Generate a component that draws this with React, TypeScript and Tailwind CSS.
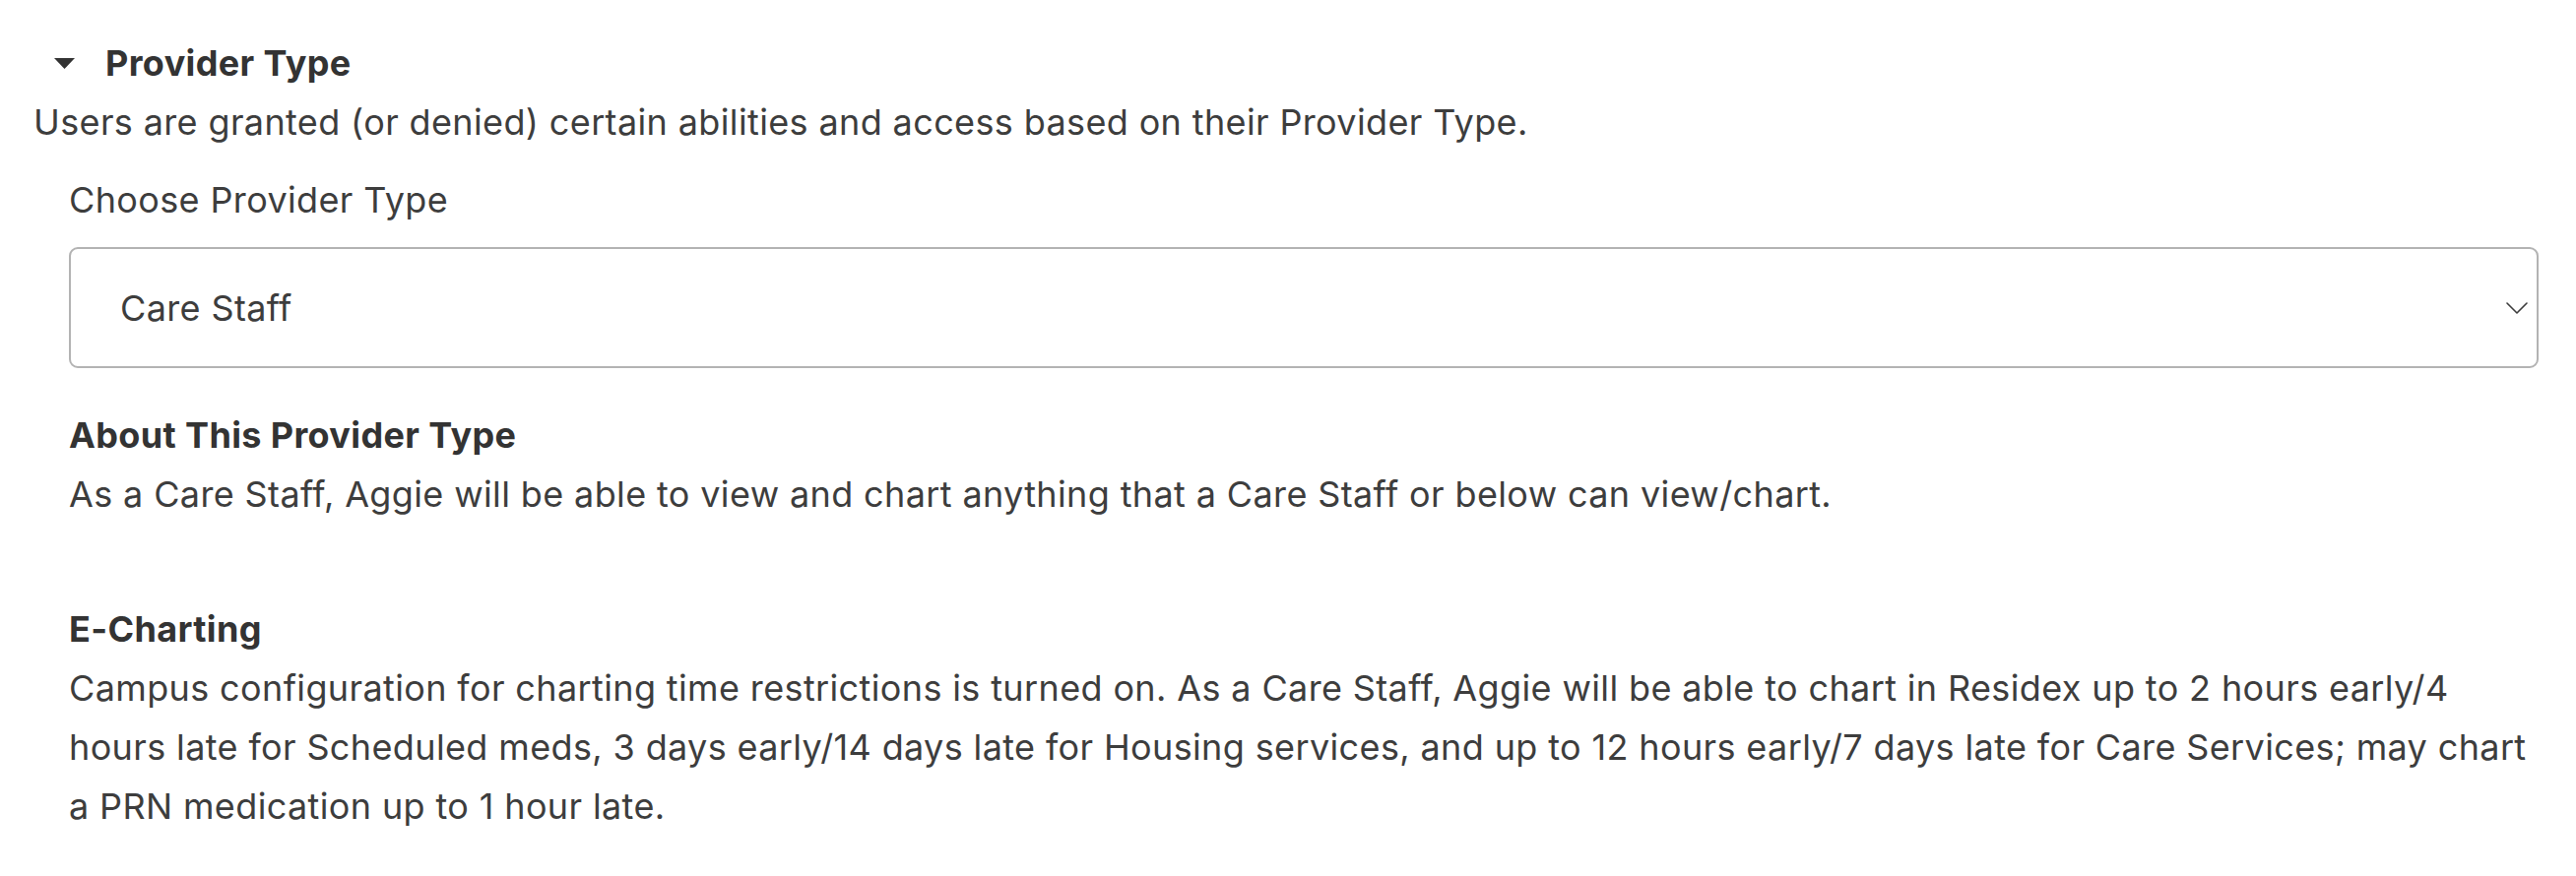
import React from "react";

const ChevronDown = () => (
  <svg width="22" height="12" viewBox="0 0 22 12" fill="none" className="shrink-0">
    <path d="M1 1 L11 11 L21 1" stroke="#3d3d3d" strokeWidth="1.6" strokeLinecap="round" strokeLinejoin="round" />
  </svg>
);

const Caret = () => (
  <svg width="21" height="11" viewBox="0 0 21 11" className="shrink-0">
    <path d="M0 0 H21 L10.5 11 Z" fill="#333333" />
  </svg>
);

export default function App() {
  return (
    <div
      className="min-h-[890px] w-full bg-white pl-[34px] pr-[38px] pt-[34px] text-[36px] leading-[60px] tracking-[0.37px] text-[#3d3d3d]"
      style={{ fontFamily: "Inter, 'Noto Sans', sans-serif" }}
    >
      <div className="flex items-center gap-[31px] pl-[21px]">
        <Caret />
        <h2 className="font-bold text-[#333333]">Provider Type</h2>
      </div>
      <p>Users are granted (or denied) certain abilities and access based on their Provider Type.</p>

      <div className="pl-[36px]">
        <div className="mt-[19px]">Choose Provider Type</div>
        <div className="mt-[18px] flex h-[123px] items-center justify-between rounded-[9px] border-2 border-[#b3b3b3] pl-[50px] pr-[9px]">
          <span>Care Staff</span>
          <ChevronDown />
        </div>

        <h3 className="mt-[38px] font-bold text-[#333333]">About This Provider Type</h3>
        <p>As a Care Staff, Aggie will be able to view and chart anything that a Care Staff or below can view/chart.</p>

        <h3 className="mt-[77px] font-bold text-[#333333]">E-Charting</h3>
        <p>
          Campus configuration for charting time restrictions is turned on. As a Care Staff, Aggie will be able to
          chart in Residex up to 2 hours early/4 hours late for Scheduled meds, 3 days early/14 days late for
          Housing services, and up to 12 hours early/7 days late for Care Services; may chart a PRN medication up
          to 1 hour late.
        </p>
      </div>
    </div>
  );
}
